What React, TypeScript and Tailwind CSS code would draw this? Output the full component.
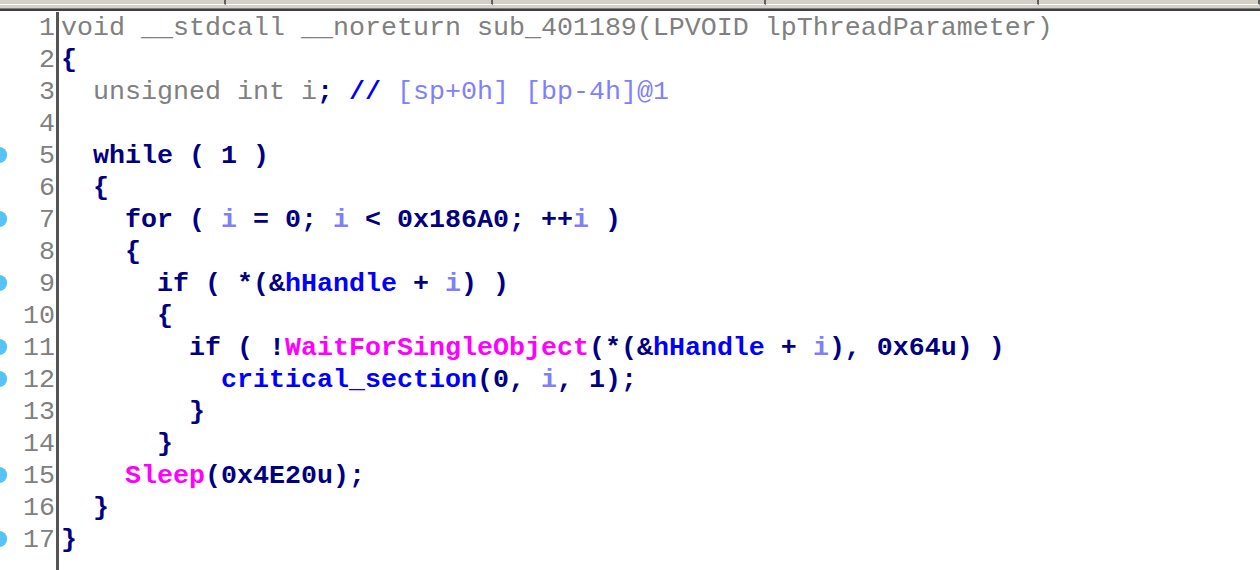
import React from 'react'

type Tok = [string, string]

// token colours, IDA pseudocode palette
const G = 'text-[#808080]'
const N = 'text-[#000080] font-bold'
const B = 'text-[#0000ff] font-bold'
const L = 'text-[#8080ff]'
const LB = 'text-[#8080ff] font-bold'
const M = 'text-[#ff00ff] font-bold'

const lines: { toks: Tok[]; dot?: boolean }[] = [
  { toks: [[G, 'void __stdcall __noreturn sub_401189(LPVOID lpThreadParameter)']] },
  { toks: [[N, '{']] },
  {
    toks: [
      [G, '  unsigned int i'],
      [N, ';'],
      [G, ' '],
      [B, '//'],
      [G, ' '],
      [L, '[sp+0h] [bp-4h]@1'],
    ],
  },
  { toks: [] },
  { toks: [[N, '  while ( 1 )']], dot: true },
  { toks: [[N, '  {']] },
  {
    toks: [
      [N, '    for ( '],
      [LB, 'i'],
      [N, ' = 0; '],
      [LB, 'i'],
      [N, ' < 0x186A0; ++'],
      [LB, 'i'],
      [N, ' )'],
    ],
    dot: true,
  },
  { toks: [[N, '    {']] },
  {
    toks: [
      [N, '      if ( *(&'],
      [B, 'hHandle'],
      [N, ' + '],
      [LB, 'i'],
      [N, ') )'],
    ],
    dot: true,
  },
  { toks: [[N, '      {']] },
  {
    toks: [
      [N, '        if ( !'],
      [M, 'WaitForSingleObject'],
      [N, '(*(&'],
      [B, 'hHandle'],
      [N, ' + '],
      [LB, 'i'],
      [N, '), 0x64u) )'],
    ],
    dot: true,
  },
  {
    toks: [
      [N, '          '],
      [B, 'critical_section'],
      [N, '(0, '],
      [LB, 'i'],
      [N, ', 1);'],
    ],
    dot: true,
  },
  { toks: [[N, '        }']] },
  { toks: [[N, '      }']] },
  { toks: [[N, '    '], [M, 'Sleep'], [N, '(0x4E20u);']], dot: true },
  { toks: [[N, '  }']] },
  { toks: [[N, '}']], dot: true },
]

const tabs = [
  'w-[226px]',
  'w-[267px]',
  'w-[273px]',
  'w-[273px]',
  'flex-1',
]

export default function App() {
  return (
    <div className="w-[1260px] h-[570px] overflow-hidden bg-white flex flex-col font-['Liberation_Mono',monospace] text-[26.67px] leading-[32px]">
      {/* tab strip */}
      <div className="h-[8px] bg-[#d4d0c8] flex items-start">
        {tabs.map((w, i) => (
          <div key={i} className={`${w} h-[5px] border-b border-white border-r-2 border-r-[#606060]`} />
        ))}
      </div>
      <div className="h-[1px] bg-[#808080]" />
      <div className="h-[2px] bg-[#404040]" />

      <div className="flex flex-1 pt-[1px]">
        {/* line numbers */}
        <div className="w-[56px] flex flex-col">
          {lines.map((ln, i) => (
            <div key={i} className="relative h-[32px] text-right pr-[1px] text-[#808080]">
              {ln.dot && (
                <span className="absolute left-[-8px] top-[7px] w-[15px] h-[16px] rounded-full bg-[#55c3f5]" />
              )}
              {i + 1}
            </div>
          ))}
        </div>
        <div className="w-[3px] bg-[#555555]" />
        {/* code */}
        <div className="flex flex-col pl-[2px] whitespace-pre">
          {lines.map((ln, i) => (
            <div key={i} className="h-[32px]">
              {ln.toks.map(([c, t], j) => (
                <span key={j} className={c}>
                  {t}
                </span>
              ))}
            </div>
          ))}
        </div>
      </div>
    </div>
  )
}
